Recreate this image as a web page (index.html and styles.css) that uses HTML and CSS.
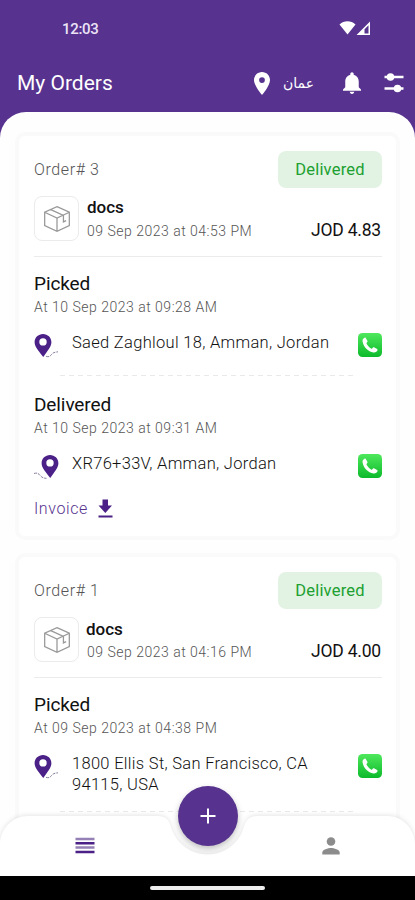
FILE: index.html
```html
<!DOCTYPE html>
<html lang="en">
<head>
    <meta charset="UTF-8">
    <meta name="viewport" content="width=device-width, initial-scale=1.0">
    <title>My Orders</title>
    <link rel="stylesheet" href="styles.css">
</head>
<body>
    <!-- Shared icons -->
    <svg class="sprite" aria-hidden="true">
        <defs>
            <linearGradient id="phoneGreen" x1="0" y1="0" x2="0" y2="1">
                <stop offset="0" stop-color="#4fe85c"/>
                <stop offset="1" stop-color="#0cba2b"/>
            </linearGradient>
        </defs>
        <symbol id="icon-pin" viewBox="5 2 14 20">
            <path d="M12 2C8.130 2 5 5.130 5 9c0 5.250 7 13 7 13s7-7.750 7-13c0-3.870-3.130-7-7-7zm0 9.500a2.500 2.500 0 0 1 0-5 2.500 2.500 0 0 1 0 5z"/>
        </symbol>
        <symbol id="icon-box" viewBox="0 0 28 28">
            <path d="M14 2.500l11.500 5.200v12.500L14 25.500 2.500 20.200V7.700zM2.500 7.700L14 13.200l11.500-5.500M14 13.200v12.300M8.200 5.200l11.800 5.500v6l2.500-1.200"/>
        </symbol>
        <symbol id="icon-from" viewBox="0 0 26 26">
            <path fill="#4b2188" fill-rule="evenodd" d="M9 1C4.300 1 .6 4.600.6 9.200.6 14 5 18 9.300 24 13 18 17.400 14 17.400 9.200 17.400 4.600 13.700 1 9 1zm0 4.200a3.700 3.700 0 1 1 0 7.400 3.700 3.700 0 0 1 0-7.400z"/>
            <path fill="none" stroke="#8a80a0" stroke-width="1" stroke-dasharray="3 1" d="M12 23.300c3 1 4.200 0 5.500-1.800s3-2.300 6.500-2.700"/>
        </symbol>
        <symbol id="icon-to" viewBox="0 0 26 26">
            <path fill="#4b2188" fill-rule="evenodd" d="M16 1C11.300 1 7.600 4.600 7.600 9.200 7.600 14 12 18 16.300 24 20 18 24.400 14 24.400 9.200 24.400 4.600 20.700 1 16 1zm0 4.200a3.700 3.700 0 1 1 0 7.400 3.700 3.700 0 0 1 0-7.400z"/>
            <path fill="none" stroke="#8a80a0" stroke-width="1" stroke-dasharray="3 1" d="M0 19.500c3-1 4.500 0 6 1.800s3 3 6.500 3"/>
        </symbol>
        <symbol id="icon-call" viewBox="0 0 24 24">
            <rect width="24" height="24" rx="4.500" fill="url(#phoneGreen)"/>
            <path fill="#fff" d="M6.500 4.700c-1.500.7-2.200 2-1.900 3.800.9 5.500 5.400 10.200 11 11 1.800.2 3.300-.8 3.900-2.200.2-.6 0-1-.4-1.300l-2.700-1.600c-.6-.3-1-.2-1.400.2l-.9.900c-.3.300-.7.200-1.100 0-2-1.300-3.400-2.900-4.400-4.800-.2-.4-.1-.7.100-1l.6-.8c.3-.4.3-.8.100-1.200L7.700 5.100c-.3-.5-.7-.6-1.200-.4z"/>
        </symbol>
    </svg>

    <div class="app">
        <header class="header">
            <div class="status-bar">
                <span class="clock">12:03</span>
                <svg class="signals" width="32" height="15" viewBox="0 0 32 15">
                    <path fill="#fff" d="M8.500 14.500L.5 4.500C5 .2 12 .2 16.500 4.500z"/>
                    <path fill="#fff" fill-rule="evenodd" d="M31 1.500V15H17.500zM29.500 5.200L25.500 9.200v4.300h4z"/>
                </svg>
            </div>
            <div class="title-bar">
                <h1>My Orders</h1>
                <svg class="pin" width="16" height="23"><use href="#icon-pin"/></svg>
                <span class="city" lang="ar">عمان</span>
                <svg class="bell" width="18" height="22" viewBox="4 2.200 16 19.800" preserveAspectRatio="none">
                    <path fill="#fff" d="M12 22c1.100 0 2-.9 2-2h-4c0 1.100.9 2 2 2zm6-6v-5c0-3.070-1.640-5.640-4.500-6.320V4c0-.83-.67-1.500-1.500-1.500s-1.500.67-1.500 1.500v.68C7.630 5.360 6 7.920 6 11v5l-2 2v1h16v-1z"/>
                </svg>
                <svg class="filter" width="20" height="20" viewBox="0 0 20 20">
                    <path stroke="#fff" stroke-width="2.400" d="M.5 4h19M.5 15.500h19"/>
                    <circle cx="6.500" cy="4" r="3.800" fill="#fff"/>
                    <circle cx="13.500" cy="15.500" r="3.800" fill="#fff"/>
                </svg>
            </div>
        </header>

        <main class="orders">
            <article class="card">
                <div class="card-top">
                    <span class="order-no">Order# 3</span>
                    <span class="badge">Delivered</span>
                </div>
                <div class="item">
                    <div class="thumb"><svg width="30" height="30"><use href="#icon-box"/></svg></div>
                    <div class="item-info">
                        <div class="item-name">docs</div>
                        <div class="date">09 Sep 2023 at 04:53 PM</div>
                    </div>
                    <div class="price">JOD 4.83</div>
                </div>
                <section class="stop">
                    <h2>Picked</h2>
                    <p class="date">At 10 Sep 2023 at 09:28 AM</p>
                    <div class="place">
                        <svg width="26" height="26"><use href="#icon-from"/></svg>
                        <span class="address">Saed Zaghloul 18, Amman, Jordan</span>
                        <svg class="call" width="24" height="24"><use href="#icon-call"/></svg>
                    </div>
                </section>
                <div class="dashes"></div>
                <section class="stop">
                    <h2>Delivered</h2>
                    <p class="date">At 10 Sep 2023 at 09:31 AM</p>
                    <div class="place">
                        <svg width="26" height="26"><use href="#icon-to"/></svg>
                        <span class="address">XR76+33V, Amman, Jordan</span>
                        <svg class="call" width="24" height="24"><use href="#icon-call"/></svg>
                    </div>
                </section>
                <a class="invoice">
                    <span>Invoice</span>
                    <svg width="15" height="19" viewBox="0 0 15 19">
                        <path fill="#4b2188" d="M4.500.500h5.500v6H14l-6.700 7.500L.500 6.500h4zM.500 16.500h14v2H.500z"/>
                    </svg>
                </a>
            </article>

            <article class="card">
                <div class="card-top">
                    <span class="order-no">Order# 1</span>
                    <span class="badge">Delivered</span>
                </div>
                <div class="item">
                    <div class="thumb"><svg width="30" height="30"><use href="#icon-box"/></svg></div>
                    <div class="item-info">
                        <div class="item-name">docs</div>
                        <div class="date">09 Sep 2023 at 04:16 PM</div>
                    </div>
                    <div class="price">JOD 4.00</div>
                </div>
                <section class="stop">
                    <h2>Picked</h2>
                    <p class="date">At 09 Sep 2023 at 04:38 PM</p>
                    <div class="place">
                        <svg width="26" height="26"><use href="#icon-from"/></svg>
                        <span class="address">1800 Ellis St, San Francisco, CA 94115, USA</span>
                        <svg class="call" width="24" height="24"><use href="#icon-call"/></svg>
                    </div>
                </section>
                <div class="dashes"></div>
            </article>
        </main>

        <!-- Bottom navigation -->
        <nav class="nav">
            <svg class="nav-shape" width="415" height="70" viewBox="0 0 415 70">
                <path fill="#fff" d="M0 70V39C0 23 12 10 28 10H156C168 10 169 15 172 24A38 38 0 0 0 243 24C246 15 247 10 259 10H387C403 10 415 23 415 39V70z"/>
            </svg>
            <div class="tabs">
                <svg width="20" height="17" viewBox="0 0 20 17">
                    <path stroke="#9581b6" stroke-width="2.400" d="M.5 2h19M.5 10.500h19"/>
                    <path stroke="#4b2188" stroke-width="2.400" d="M.5 6.200h19M.5 15h19"/>
                </svg>
                <svg width="18" height="18" viewBox="0 0 18 18" fill="#8c8c8c">
                    <circle cx="9" cy="4.500" r="4.300"/>
                    <path d="M.3 17.500v-2c0-3 5.800-4.500 8.700-4.500s8.700 1.500 8.700 4.500v2z"/>
                </svg>
            </div>
            <button class="add" aria-label="New order">
                <svg width="16" height="16" viewBox="0 0 16 16"><path stroke="#fff" stroke-width="2" d="M8 .5v15M.5 8h15"/></svg>
            </button>
        </nav>
        <div class="home-bar"><span></span></div>
    </div>
</body>
</html>
```
FILE: styles.css
```css
* {
    margin: 0;
    padding: 0;
    box-sizing: border-box;
}
body {
    background: #57328f;
    font-family: Roboto, 'Noto Sans', sans-serif;
    color: #111;
}
svg {
    display: block;
    flex-shrink: 0;
}
.sprite {
    position: absolute;
    width: 0;
    height: 0;
}
.app {
    position: relative;
    width: 415px;
    height: 900px;
    overflow: hidden;
    display: flex;
    flex-direction: column;
    background: #57328f;
}

/* Header */
.header {
    height: 112px;
    flex-shrink: 0;
    color: #fff;
}
.status-bar {
    height: 57px;
    padding: 0 44px 0 62px;
    display: flex;
    align-items: center;
    justify-content: space-between;
}
.clock {
    font-size: 15px;
    font-weight: 500;
    letter-spacing: -0.3px;
    color: #ece4f6;
}
.signals {
    margin-top: -3px;
}
.title-bar {
    height: 52px;
    padding: 0 11px 0 17px;
    display: flex;
    align-items: center;
}
.title-bar h1 {
    flex: 1;
    font-size: 21px;
    font-weight: 400;
    line-height: 24px;
}
.pin {
    fill: #fff;
    margin-right: 13px;
}
.city {
    width: 30px;
    margin-right: 30px;
    font-family: 'DejaVu Sans', sans-serif;
    font-size: 14px;
    text-align: center;
    white-space: nowrap;
}
.bell {
    margin-right: 23px;
}

/* Orders list */
.orders {
    flex: 1;
    min-height: 0;
    overflow: hidden;
    padding: 20px 15px 0;
    background: #fefefe;
    border-radius: 26px 26px 0 0;
    display: flex;
    flex-direction: column;
    gap: 13px;
}
.card {
    flex-shrink: 0;
    height: 408px;
    padding: 15px 14px 0 15px;
    background: #fff;
    border: 4px solid #fafafa;
    border-radius: 10px;
}
.card-top {
    height: 37px;
    display: flex;
    justify-content: space-between;
    align-items: center;
}
.order-no {
    font-size: 16px;
    letter-spacing: 0.6px;
    font-weight: 300;
    color: #555;
}
.badge {
    width: 104px;
    height: 37px;
    line-height: 37px;
    border-radius: 8px;
    background: #e2f3e3;
    color: #20a030;
    font-size: 16.5px;
    letter-spacing: 0.2px;
    text-align: center;
}
.item {
    height: 69px;
    padding-top: 8px;
    display: flex;
    border-bottom: 1px solid #ebebeb;
}
.thumb {
    width: 45px;
    height: 45px;
    margin-right: 8px;
    border: 1px solid #ebebeb;
    border-radius: 8px;
    display: flex;
    align-items: center;
    justify-content: center;
    fill: none;
    stroke: #999;
    stroke-width: 1.2;
}
.item-info {
    flex: 1;
}
.item-name {
    font-size: 17px;
    font-weight: 500;
    line-height: 22px;
}
.card:last-child .item-name {
    position: relative;
    top: 1px;
    left: -1px;
}
.date {
    font-size: 14px;
    font-weight: 300;
    line-height: 20px;
    letter-spacing: 0.5px;
    color: #555;
}
.item-info .date {
    margin-top: 3px;
}
.price {
    margin: 24px 1px 0 0;
    font-size: 17.5px;
    line-height: 20px;
    letter-spacing: -0.2px;
}
.stop {
    height: 104px;
}
.item + .stop {
    padding-top: 15px;
    height: 118px;
}
.stop h2 {
    font-size: 19px;
    font-weight: 400;
    line-height: 24px;
    letter-spacing: -0.1px;
}
.stop .date {
    margin-top: 1px;
}
.place {
    margin-top: 16px;
    display: flex;
}
.address {
    width: 270px;
    margin: -1px 0 0 12px;
    font-size: 16.5px;
    font-weight: 300;
    line-height: 21px;
    letter-spacing: 0.3px;
    color: #111;
}
.call {
    margin-left: auto;
}
.dashes {
    height: 1px;
    margin: 0 29px 17px 26px;
    background: repeating-linear-gradient(90deg, #e9e9e9 0 5px, transparent 5px 9px);
}
.card:last-child .dashes {
    margin-top: 15px;
}
.invoice {
    display: flex;
    gap: 10px;
    margin-top: 2px;
    color: #57328f;
    font-size: 16px;
    font-weight: 300;
    line-height: 20px;
    letter-spacing: 0.6px;
}

/* Bottom navigation */
.nav {
    position: absolute;
    left: 0;
    bottom: 25px;
    width: 415px;
    height: 69px;
}
.nav-shape {
    position: absolute;
    left: 0;
    top: 0;
    filter: drop-shadow(0 -1px 2px rgba(0, 0, 0, 0.1));
}
.tabs {
    position: relative;
    height: 69px;
    padding: 10px 75px 0 75px;
    display: flex;
    justify-content: space-between;
    align-items: center;
}
.add {
    position: absolute;
    left: 178px;
    top: -20px;
    width: 60px;
    height: 60px;
    border: none;
    border-radius: 50%;
    background: #57328f;
    display: flex;
    align-items: center;
    justify-content: center;
    box-shadow: 0 3px 6px rgba(0, 0, 0, 0.25);
}
.home-bar {
    height: 25px;
    flex-shrink: 0;
    background: #000;
    display: flex;
    align-items: center;
    justify-content: center;
}
.home-bar span {
    width: 115px;
    height: 4px;
    border-radius: 2px;
    background: #eee;
}
```
